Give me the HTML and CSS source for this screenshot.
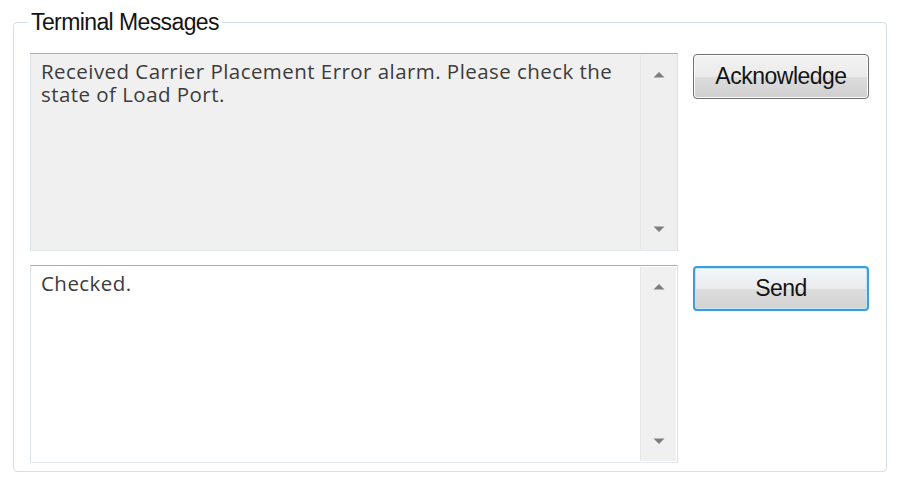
FILE: index.html
```html
<!DOCTYPE html>
<html>
<head>
<meta charset="utf-8">
<link rel="stylesheet" href="styles.css">
</head>
<body>
<fieldset class="group">
  <legend class="group-title">Terminal Messages</legend>
  <div class="grid">
    <div class="box box-readonly">
      <div class="box-text">Received Carrier Placement Error alarm. Please check the state of Load Port.</div>
      <div class="scroll">
        <svg class="arrow" width="12" height="7" viewBox="0 0 12 7"><path d="M0.5 6.5 L6 1 L11.5 6.5 Z" fill="#7e7e7e"/></svg>
        <svg class="arrow" width="12" height="7" viewBox="0 0 12 7"><path d="M0.5 0.5 L6 6 L11.5 0.5 Z" fill="#7e7e7e"/></svg>
      </div>
    </div>
    <div class="btn-cell"><button class="btn">Acknowledge</button></div>
    <div class="box box-edit">
      <div class="box-text">Checked.</div>
      <div class="scroll">
        <svg class="arrow" width="12" height="7" viewBox="0 0 12 7"><path d="M0.5 6.5 L6 1 L11.5 6.5 Z" fill="#7e7e7e"/></svg>
        <svg class="arrow" width="12" height="7" viewBox="0 0 12 7"><path d="M0.5 0.5 L6 6 L11.5 0.5 Z" fill="#7e7e7e"/></svg>
      </div>
    </div>
    <div class="btn-cell"><button class="btn btn-focus">Send</button></div>
  </div>
</fieldset>
</body>
</html>
```
FILE: styles.css
```css
html, body {
  margin: 0;
  padding: 0;
  background: #ffffff;
}
body {
  width: 900px;
  height: 485px;
  overflow: hidden;
  padding-top: 10px;
  box-sizing: border-box;
}
.group {
  margin: 0 0 0 13px;
  width: 874px;
  box-sizing: border-box;
  border: 1px solid #d5dfe5;
  border-radius: 4px;
  padding: 19px 16px 8px 16px;
  min-width: 0;
}
.group-title {
  font-family: "Liberation Sans", Arial, sans-serif;
  font-size: 23px;
  letter-spacing: -0.6px;
  line-height: 24px;
  color: #141414;
  padding: 0 3px;
  margin-left: -2px;
}
.grid {
  display: grid;
  grid-template-columns: 648px 176px;
  grid-template-rows: 198px 198px;
  column-gap: 15px;
  row-gap: 14px;
}
.box {
  display: flex;
  box-sizing: border-box;
  border: 1px solid #dbdfe6;
  border-top-color: #abadb3;
  border-bottom-color: #e3e9ef;
}
.box-readonly {
  background: #f0f0f0;
}
.box-edit {
  background: #ffffff;
}
.box-text {
  flex: 1;
  padding: 6px 10px;
  font-family: "Open Sans", "Noto Sans", sans-serif;
  font-size: 20.5px;
  letter-spacing: 0.45px;
  line-height: 23px;
  color: #3c3c3c;
}
.scroll {
  width: 35px;
  display: flex;
  flex-direction: column;
  justify-content: space-between;
  align-items: center;
  padding: 16px 0 16px;
  background: #f0f0f0;
  border-left: 1px solid #e6e6e6;
  margin: 1px 1px 1px 0;
}
.box-readonly .scroll {
  border-left-color: #e6e6e6;
  background: #efefef;
}
.arrow {
  display: block;
}
.btn-cell {
  padding-top: 1px;
}
.btn {
  width: 176px;
  height: 45px;
  box-sizing: border-box;
  border: 1px solid #707070;
  border-radius: 4px;
  background: linear-gradient(#f2f2f2 0%, #ebebeb 50%, #dddddd 51%, #cfcfcf 100%);
  box-shadow: inset 0 0 0 1px #fcfcfc;
  font-family: "Liberation Sans", Arial, sans-serif;
  font-size: 23px;
  letter-spacing: -0.5px;
  color: #141414;
  padding: 0;
}
.btn-focus {
  border: 2px solid #3c9fdc;
  box-shadow: inset 0 0 0 1px #c4e5f6;
  background: linear-gradient(#f1f8fd 0%, #ebebeb 50%, #dddddd 51%, #d2d2d2 100%);
}
```
